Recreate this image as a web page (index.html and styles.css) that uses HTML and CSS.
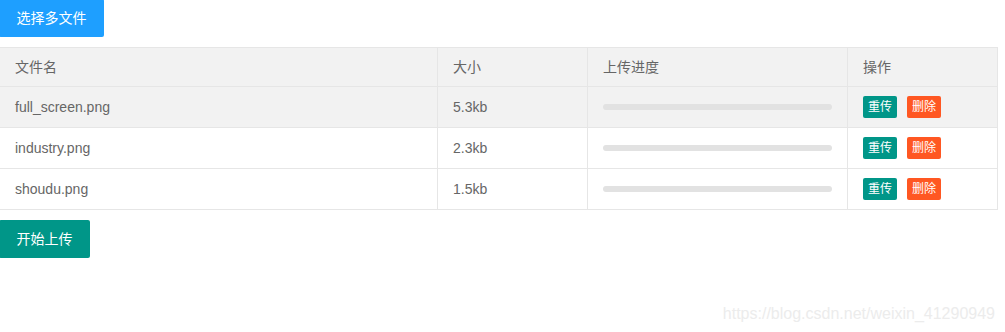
FILE: index.html
```html
<!DOCTYPE html>
<html lang="zh-CN">
<head>
    <meta charset="UTF-8">
    <meta name="viewport" content="width=device-width, initial-scale=1.0">
    <title>多文件上传</title>
    <link rel="stylesheet" href="styles.css">
</head>
<body>
    <div class="page">
        <button type="button" class="btn btn-normal">选择多文件</button>

        <table class="file-table">
            <colgroup>
                <col class="col-name">
                <col class="col-size">
                <col class="col-progress">
                <col class="col-action">
            </colgroup>
            <thead>
                <tr>
                    <th>文件名</th>
                    <th>大小</th>
                    <th>上传进度</th>
                    <th>操作</th>
                </tr>
            </thead>
            <tbody>
                <tr class="hover">
                    <td>full_screen.png</td>
                    <td>5.3kb</td>
                    <td><div class="progress"></div></td>
                    <td>
                        <button type="button" class="btn-xs btn-teal">重传</button>
                        <button type="button" class="btn-xs btn-danger">删除</button>
                    </td>
                </tr>
                <tr>
                    <td>industry.png</td>
                    <td>2.3kb</td>
                    <td><div class="progress"></div></td>
                    <td>
                        <button type="button" class="btn-xs btn-teal">重传</button>
                        <button type="button" class="btn-xs btn-danger">删除</button>
                    </td>
                </tr>
                <tr>
                    <td>shoudu.png</td>
                    <td>1.5kb</td>
                    <td><div class="progress"></div></td>
                    <td>
                        <button type="button" class="btn-xs btn-teal">重传</button>
                        <button type="button" class="btn-xs btn-danger">删除</button>
                    </td>
                </tr>
            </tbody>
        </table>

        <button type="button" class="btn">开始上传</button>
    </div>

    <div class="watermark">https://blog.csdn.net/weixin_41290949</div>
</body>
</html>
```

FILE: styles.css
```css
body {
    margin: 0;
    background-color: #fff;
    color: #666;
    font-family: "Liberation Sans", Arial, "Noto Sans CJK SC", sans-serif;
    font-size: 14px;
}

.page {
    margin: -1px 0 0 -1px;
    width: 998px;
}

.btn {
    display: block;
    height: 38px;
    line-height: 38px;
    padding: 0 17.5px;
    background-color: #009688;
    color: #fff;
    font-family: inherit;
    font-size: 14px;
    border: none;
    border-radius: 2px;
    cursor: pointer;
}

.btn-normal {
    background-color: #1E9FFF;
}

.file-table {
    width: 998px;
    margin: 10px 0;
    border-collapse: collapse;
    table-layout: fixed;
    border: 1px solid #e6e6e6;
}

.col-name { width: 438px; }
.col-size { width: 150px; }
.col-progress { width: 260px; }
.col-action { width: 150px; }

.file-table th,
.file-table td {
    padding: 9px 15px;
    border: 1px solid #e6e6e6;
    text-align: left;
    font-weight: normal;
    font-size: 14px;
    color: #666;
}

.file-table th {
    line-height: 20px;
}

.file-table td {
    line-height: 22px;
}

.file-table thead tr,
.file-table tr.hover {
    background-color: #f2f2f2;
}

.progress {
    height: 6px;
    background-color: #e2e2e2;
    border-radius: 20px;
}

.btn-xs {
    height: 22px;
    line-height: 22px;
    padding: 0 5px;
    font-family: inherit;
    font-size: 12px;
    color: #fff;
    border: none;
    border-radius: 2px;
    vertical-align: top;
    cursor: pointer;
}

.btn-xs + .btn-xs {
    margin-left: 6px;
}

.btn-teal {
    background-color: #009688;
}

.btn-danger {
    background-color: #FF5722;
}

.watermark {
    position: absolute;
    right: 10px;
    bottom: 9px;
    font-size: 16px;
    color: #ececec;
}
```
